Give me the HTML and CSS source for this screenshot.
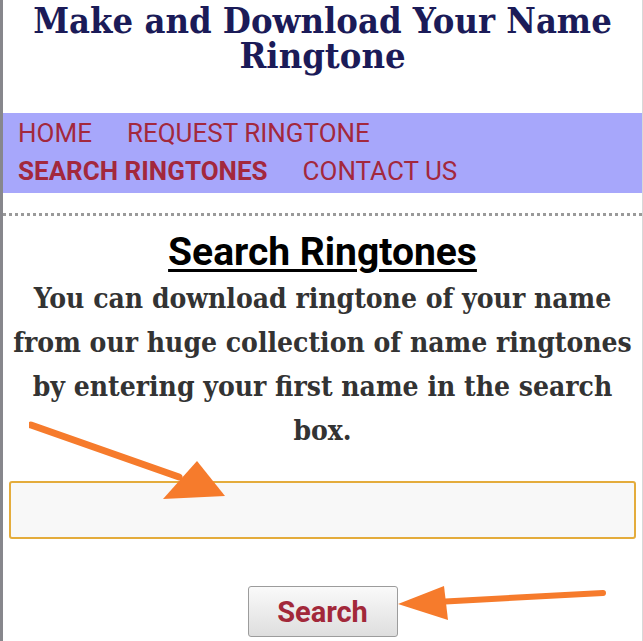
FILE: index.html
```html
<!DOCTYPE html>
<html lang="en">
<head>
  <meta charset="UTF-8">
  <title>Search Ringtones</title>
  <link rel="stylesheet" href="styles.css">
</head>
<body>

<header>
  <h1 class="site-title">Make and Download Your Name Ringtone</h1>
</header>

<nav class="menu">
  <a href="#">HOME</a>
  <a href="#">REQUEST RINGTONE</a>
  <a href="#" class="active">SEARCH RINGTONES</a>
  <a href="#">CONTACT US</a>
</nav>

<main>
  <h2 class="page-title">Search Ringtones</h2>
  <p class="intro">You can download ringtone of your name from our huge collection of name ringtones by entering your first name in the search box.</p>

  <form class="search-form">
    <input type="text" class="search-box">
    <button type="submit" class="btn-search">Search</button>

    <!-- arrows drawn on the screenshot -->
    <svg class="arrow arrow-one" width="200" height="80" viewBox="0 0 200 80">
      <path d="M2 6 L150 58" stroke="#f67b2c" stroke-width="7" stroke-linecap="round" fill="none"/>
      <path d="M168 42 L196 77 L134 80 Z" fill="#f67b2c"/>
    </svg>
    <svg class="arrow arrow-two" width="210" height="40" viewBox="0 0 210 40">
      <path d="M207 8 L40 17" stroke="#f67b2c" stroke-width="6" stroke-linecap="round" fill="none"/>
      <path d="M2 19 L48 1 L52 35 Z" fill="#f67b2c"/>
    </svg>
  </form>
</main>

</body>
</html>
```

FILE: styles.css
```css
* {
  box-sizing: border-box;
  margin: 0;
  padding: 0;
}

body {
  background-color: #fff;
  border-left: 3px solid #87878c;
  border-right: 1px solid #d8d8d8;
  min-height: 100vh;
  font-family: 'DejaVu Serif', serif;
}

header {
  padding-top: 3px;
  height: 110px;
}

.site-title {
  font-family: 'DejaVu Serif', serif;
  font-stretch: condensed;
  font-size: 36px;
  line-height: 35px;
  font-weight: bold;
  color: #1b1b58;
  text-align: center;
}

.menu {
  background-color: #a7a7fb;
  padding: 1px 15px 3px;
  display: flex;
  flex-wrap: wrap;
  column-gap: 35px;
  margin-top: 3px;
}

.menu a {
  font-family: 'Roboto', sans-serif;
  font-size: 26px;
  line-height: 38px;
  color: #a3283d;
  text-decoration: none;
}

.menu a.active {
  font-weight: bold;
}

main {
  border-top: 3px dotted #9a9a9a;
  margin-top: 20px;
  text-align: center;
}

.page-title {
  font-family: 'Roboto', sans-serif;
  font-size: 39px;
  font-weight: bold;
  color: #000;
  text-decoration: underline;
  text-decoration-thickness: 3px;
  text-underline-offset: 4px;
  margin-top: 14px;
  line-height: 44px;
}

.intro {
  font-family: 'DejaVu Serif', serif;
  font-stretch: condensed;
  font-size: 28px;
  line-height: 44px;
  font-weight: bold;
  color: #333;
  padding: 0 8px;
  margin-top: 3px;
}

.search-form {
  position: relative;
  display: flex;
  flex-direction: column;
  align-items: center;
  margin-top: 28px;
}

.search-box {
  display: block;
  width: calc(100% - 12px);
  margin-left: 6px;
  align-self: flex-start;
  height: 58px;
  border: 2px solid #e4ac3c;
  border-radius: 3px;
  background-color: #f8f8f8;
}

.btn-search {
  margin-top: 47px;
  width: 150px;
  height: 51px;
  font-family: 'Roboto', sans-serif;
  font-size: 29px;
  font-weight: bold;
  color: #a2283a;
  background: linear-gradient(#fafafa, #dedede);
  border: 1px solid #9c9c9c;
  border-radius: 3px;
  cursor: pointer;
}

.arrow {
  position: absolute;
  pointer-events: none;
}

.arrow-one {
  left: 26px;
  top: -62px;
}

.arrow-two {
  left: 393px;
  top: 104px;
}
```
